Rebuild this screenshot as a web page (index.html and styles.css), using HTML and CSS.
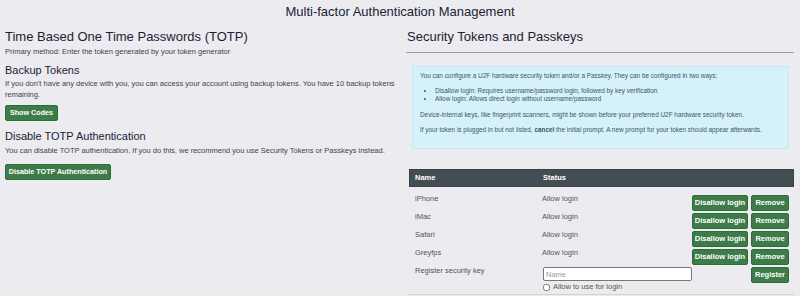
FILE: index.html
```html
<!DOCTYPE html>
<html lang="en">
<head>
<meta charset="utf-8">
<title>Multi-factor Authentication Management</title>
<link rel="stylesheet" href="styles.css">
</head>
<body>
<h1 class="page-title">Multi-factor Authentication Management</h1>
<div class="columns">
  <section class="col col-left">
    <h2 class="sec-title">Time Based One Time Passwords (TOTP)</h2>
    <p class="note note-tight">Primary method: Enter the token generated by your token generator</p>
    <h4 class="sub-title">Backup Tokens</h4>
    <p class="note note-wrap">If you don't have any device with you, you can access your account using backup tokens. You have 10 backup tokens remaining.</p>
    <button class="btn btn-show">Show Codes</button>
    <h3 class="sec-title2">Disable TOTP Authentication</h3>
    <p class="note note-tight">You can disable TOTP authentication. If you do this, we recommend you use Security Tokens or Passkeys instead.</p>
    <button class="btn btn-disable">Disable TOTP Authentication</button>
  </section>
  <section class="col col-right">
    <h2 class="sec-title sec-title-right">Security Tokens and Passkeys</h2>
    <hr class="rule">
    <div class="info">
      <p>You can configure a U2F hardware security token and/or a Passkey. They can be configured in two ways:</p>
      <ul>
        <li>Disallow login: Requires username/password login, followed by key verification</li>
        <li>Allow login: Allows direct login without username/password</li>
      </ul>
      <p>Device-internal keys, like fingerprint scanners, might be shown before your preferred U2F hardware security token.</p>
      <p>If your token is plugged in but not listed, <b>cancel</b> the initial prompt. A new prompt for your token should appear afterwards.</p>
    </div>
    <div class="keys">
      <div class="keys-head">
        <span class="cell-name">Name</span>
        <span class="cell-status">Status</span>
        <span class="cell-actions"></span>
      </div>
      <div class="keys-row">
        <span class="cell-name">iPhone</span>
        <span class="cell-status">Allow login</span>
        <span class="cell-actions"><button class="btn btn-sm">Disallow login</button><button class="btn btn-sm">Remove</button></span>
      </div>
      <div class="keys-row">
        <span class="cell-name">iMac</span>
        <span class="cell-status">Allow login</span>
        <span class="cell-actions"><button class="btn btn-sm">Disallow login</button><button class="btn btn-sm">Remove</button></span>
      </div>
      <div class="keys-row">
        <span class="cell-name">Safari</span>
        <span class="cell-status">Allow login</span>
        <span class="cell-actions"><button class="btn btn-sm">Disallow login</button><button class="btn btn-sm">Remove</button></span>
      </div>
      <div class="keys-row">
        <span class="cell-name">Greyfps</span>
        <span class="cell-status">Allow login</span>
        <span class="cell-actions"><button class="btn btn-sm">Disallow login</button><button class="btn btn-sm">Remove</button></span>
      </div>
      <div class="keys-row keys-register">
        <span class="cell-name">Register security key</span>
        <span class="cell-status">
          <input class="name-input" type="text" placeholder="Name">
          <label class="check"><input type="checkbox" class="check-box">Allow to use for login</label>
        </span>
        <span class="cell-actions"><button class="btn btn-sm">Register</button></span>
      </div>
    </div>
  </section>
</div>
</body>
</html>
```
FILE: styles.css
```css
* { box-sizing: border-box; }

body {
  margin: 0;
  background: #ebebf0;
  font-family: "Liberation Sans", Arial, sans-serif;
  color: #3a3a3a;
  width: 800px;
  height: 296px;
  overflow: hidden;
}

.page-title {
  margin: 0;
  padding-top: 3px;
  font-size: 13px;
  line-height: 18px;
  font-weight: normal;
  text-align: center;
  color: #1c2234;
}

.columns {
  display: grid;
  grid-template-columns: 400px 400px;
}

.col-left {
  padding: 0 5px;
}

.col-right {
  padding: 0 3px 0 6px;
}

.sec-title {
  margin: 8px 0 0;
  font-size: 13px;
  line-height: 16px;
  font-weight: normal;
  color: #1c2234;
}

.sec-title-right {
  padding-left: 1px;
}

.note {
  margin: 0;
  font-size: 7.5px;
  color: #444;
}

.note-tight {
  margin-top: 2px;
  line-height: 10px;
}

.note-wrap {
  margin-top: 1px;
  line-height: 11px;
}

.sub-title {
  margin: 6px 0 0;
  font-size: 11px;
  line-height: 14px;
  font-weight: normal;
  color: #1c2234;
}

.sec-title2 {
  margin: 8px 0 0;
  font-size: 11px;
  line-height: 15px;
  font-weight: normal;
  color: #1c2234;
}

.btn {
  display: block;
  height: 16px;
  padding: 0;
  border: 1px solid #2e6b3a;
  border-radius: 2px;
  background: #3d7b48;
  color: #fff;
  font-family: "Liberation Sans", Arial, sans-serif;
  font-size: 7.2px;
  font-weight: bold;
  line-height: 14px;
  white-space: nowrap;
  text-align: center;
}

.btn-show {
  margin-top: 5px;
  width: 53px;
}

.btn-disable {
  margin-top: 8px;
  width: 106px;
}

.rule {
  margin: 7px 3px 0 0;
  border: 0;
  border-top: 1px solid #9a9a9e;
  height: 0;
}

.info {
  margin: 13px 8px 0 6px;
  padding: 5px 7px 7px;
  background: #d5f2fa;
  border: 1px solid #c3e9f4;
  border-radius: 2px;
  font-size: 6.4px;
  line-height: 8px;
  color: #3d5560;
}

.info p {
  margin: 0 0 7px;
}

.info ul {
  margin: 0 0 8px;
  padding-left: 15px;
}

.keys {
  margin: 20px 3px 0 3px;
  padding-bottom: 3px;
  border-bottom: 1px solid #d2d2d6;
  font-size: 7.5px;
  color: #555;
}

.keys-head,
.keys-row {
  display: grid;
  grid-template-columns: 133px 150px 1fr;
}

.keys-head {
  height: 18px;
  background: #454d54;
  border: 1px solid #3a4147;
  color: #fff;
  font-weight: bold;
  line-height: 16px;
  margin-bottom: 8px;
}

.keys-row {
  height: 18px;
  line-height: 8px;
}

.cell-name {
  padding-left: 6px;
}

.keys-head .cell-name {
  padding-left: 5px;
}

.cell-actions {
  display: flex;
  justify-content: flex-end;
  gap: 3px;
  padding-right: 5px;
}

.btn-sm {
  height: 16px;
  font-size: 7.5px;
}

.cell-actions .btn-sm:first-child:not(:last-child) {
  width: 56px;
}

.cell-actions .btn-sm:last-child {
  width: 38px;
}

.keys-register {
  height: auto;
}

.name-input {
  display: block;
  width: 149px;
  height: 14px;
  margin: 0 0 0 1px;
  padding: 0 2px;
  border: 1px solid #777;
  border-radius: 2px;
  background: #fff;
  font-family: "Liberation Sans", Arial, sans-serif;
  font-size: 7.5px;
  color: #333;
}

.name-input::placeholder {
  color: #999;
}

.check {
  display: flex;
  align-items: center;
  margin-top: 2px;
  margin-left: 1px;
  line-height: 8px;
  color: #555;
}

.check-box {
  width: 7px;
  height: 7px;
  margin: 0 3px 0 0;
}
```
